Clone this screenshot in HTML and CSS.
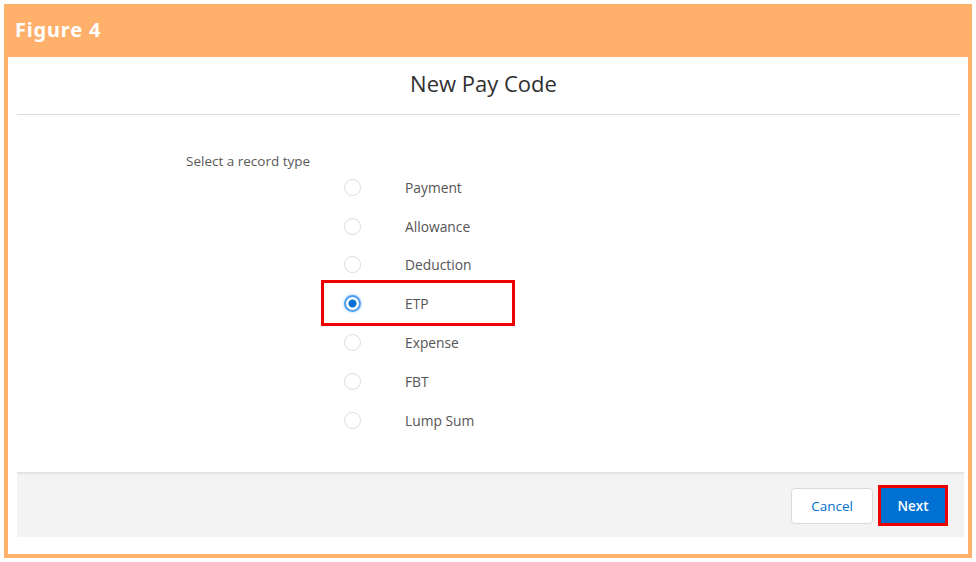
FILE: index.html
```html
<!DOCTYPE html>
<html lang="en">
<head>
    <meta charset="UTF-8">
    <title>Figure 4 | New Pay Code</title>
    <link rel="stylesheet" href="styles.css">
</head>
<body>
    <div class="figure">
        <div class="figure-head">Figure 4</div>
        <div class="figure-body">
            <div class="modal-title">New Pay Code</div>
            <div class="modal-content">
                <div class="field-label">Select a record type</div>
                <div class="options">
                    <label class="option"><span class="radio"></span><span class="option-text">Payment</span></label>
                    <label class="option"><span class="radio"></span><span class="option-text">Allowance</span></label>
                    <label class="option"><span class="radio"></span><span class="option-text">Deduction</span></label>
                    <label class="option"><span class="radio checked"></span><span class="option-text">ETP</span></label>
                    <label class="option"><span class="radio"></span><span class="option-text">Expense</span></label>
                    <label class="option"><span class="radio"></span><span class="option-text">FBT</span></label>
                    <label class="option"><span class="radio"></span><span class="option-text">Lump Sum</span></label>
                    <div class="highlight etp-box"></div>
                </div>
            </div>
            <div class="modal-footer">
                <button class="btn btn-neutral">Cancel</button>
                <button class="btn btn-brand">Next</button>
            </div>
        </div>
    </div>
</body>
</html>
```

FILE: styles.css
```css
body {
    margin: 0;
    padding: 4px;
    background-color: #ffffff;
    font-family: "Open Sans", "Noto Sans", Arial, sans-serif;
}
.figure {
    width: 968px;
    height: 554px;
    box-sizing: border-box;
    background-color: #ffb06b;
    display: flex;
    flex-direction: column;
}
.figure-head {
    height: 53px;
    line-height: 51px;
    padding-left: 11px;
    color: #ffffff;
    font-family: "Noto Sans", Arial, sans-serif;
    font-weight: bold;
    font-size: 20px;
    letter-spacing: 0.8px;
}
.figure-body {
    flex: 1;
    margin: 0 4px 4px 4px;
    background-color: #ffffff;
    display: flex;
    flex-direction: column;
}
.modal-title {
    margin: 0 8px 0 9px;
    height: 57px;
    border-bottom: 1px solid #dddbda;
    display: flex;
    align-items: center;
    justify-content: center;
    font-size: 22px;
    color: #2f2f2f;
    padding-right: 10px;
    padding-bottom: 5px;
    box-sizing: border-box;
    height: 58px;
}
.modal-content {
    flex: 1;
    padding-left: 178px;
    padding-top: 36px;
}
.field-label {
    font-size: 13.5px;
    line-height: 20px;
    color: #5a5a5a;
}
.options {
    position: relative;
    margin-left: 158px;
    margin-top: -3px;
    display: flex;
    flex-direction: column;
}
.option {
    height: 38.8px;
    display: flex;
    align-items: center;
    font-size: 13.8px;
    color: #555555;
}
.radio {
    width: 17px;
    height: 17px;
    box-sizing: border-box;
    border: 1px solid #dcdcdc;
    border-radius: 50%;
    background-color: #ffffff;
    margin-right: 44px;
    flex-shrink: 0;
}
.radio.checked {
    border: 2px solid #4a9ff5;
    box-shadow: 0 0 3px #8cc3f7;
    background: radial-gradient(circle, #0070d2 0, #0070d2 3.5px, #ffffff 4.5px);
}
.highlight {
    position: absolute;
    border: 3px solid #ee0000;
    box-sizing: border-box;
}
.etp-box {
    left: -23px;
    top: 112px;
    width: 194px;
    height: 46px;
}
.modal-footer {
    margin: 0 4px 17px 9px;
    height: 63px;
    background-color: #f3f3f3;
    border-top: 2px solid #e3e3e3;
    display: flex;
    align-items: center;
    justify-content: flex-end;
    padding-right: 16px;
    gap: 5px;
}
.btn {
    font-family: "Open Sans", "Noto Sans", Arial, sans-serif;
    font-size: 13.5px;
    border-radius: 4px;
    cursor: pointer;
}
.btn-neutral {
    width: 82px;
    height: 36px;
    background-color: #ffffff;
    border: 1px solid #dddbda;
    color: #0070d2;
}
.btn-brand {
    width: 70px;
    height: 41px;
    background-color: #0070d2;
    border: 3px solid #ee0000;
    border-radius: 0;
    color: #ffffff;
    font-weight: 600;
}
```
